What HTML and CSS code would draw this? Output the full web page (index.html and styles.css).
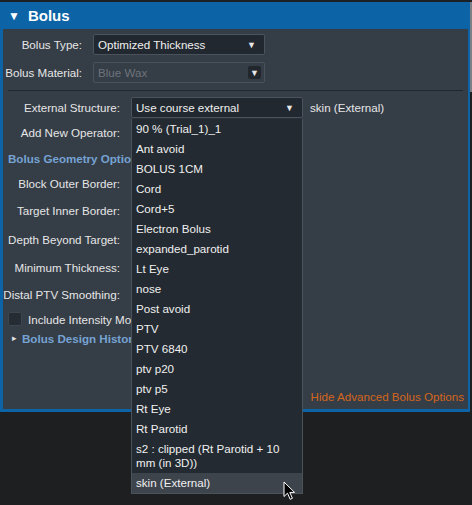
FILE: index.html
```html
<!DOCTYPE html>
<html>
<head>
<meta charset="utf-8">
<link rel="stylesheet" href="styles.css">
</head>
<body>
<div class="topstrip"></div>
<div class="panel">
  <div class="header"><span class="caret">▼</span>Bolus</div>
  <div class="content">
    <div class="row">
      <label class="lbl short">Bolus Type:</label>
      <div class="select"><span>Optimized Thickness</span><span class="arrow">▼</span></div>
    </div>
    <div class="row">
      <label class="lbl short">Bolus Material:</label>
      <div class="select disabled"><span>Blue Wax</span><span class="btn"><span class="arrow">▼</span></span></div>
    </div>
    <div class="sep"></div>
    <div class="row last">
      <label class="lbl">External Structure:</label>
      <div class="select"><span>Use course external</span><span class="arrow">▼</span></div>
      <span class="value">skin (External)</span>
    </div>
    <div class="frow h28"><label class="lbl">Add New Operator:</label></div>
    <div class="frow h24"><span class="section">Bolus Geometry Options</span></div>
    <div class="frow h26"><label class="lbl">Block Outer Border:</label></div>
    <div class="frow h28"><label class="lbl">Target Inner Border:</label></div>
    <div class="frow h30"><label class="lbl">Depth Beyond Target:</label></div>
    <div class="frow h26"><label class="lbl">Minimum Thickness:</label></div>
    <div class="frow h28"><label class="lbl">Distal PTV Smoothing:</label></div>
    <div class="frow h22 check"><span class="box"></span><span>Include Intensity Modulation</span></div>
    <div class="frow h16 hist"><span class="tri">▸</span><span class="section">Bolus Design History</span></div>
    <div class="footer"><span class="link">Hide Advanced Bolus Options</span></div>
  </div>
  <div class="scroll"></div>
</div>

<ul class="dropdown">
  <li>90 % (Trial_1)_1</li>
  <li>Ant avoid</li>
  <li>BOLUS 1CM</li>
  <li>Cord</li>
  <li>Cord+5</li>
  <li>Electron Bolus</li>
  <li>expanded_parotid</li>
  <li>Lt Eye</li>
  <li>nose</li>
  <li>Post avoid</li>
  <li>PTV</li>
  <li>PTV 6840</li>
  <li>ptv p20</li>
  <li>ptv p5</li>
  <li>Rt Eye</li>
  <li>Rt Parotid</li>
  <li>s2 : clipped (Rt Parotid + 10 mm (in 3D))</li>
  <li class="active">skin (External)</li>
</ul>

<svg class="cursor" width="14" height="20" viewBox="0 0 14 20">
  <path d="M1 1 L1 15.5 L4.5 12.2 L7.2 18.3 L9.4 17.3 L6.8 11.4 L11.6 11.4 Z" fill="#000" stroke="#fff" stroke-width="1"/>
</svg>
</body>
</html>
```

FILE: styles.css
```css
html, body {
  margin: 0;
  padding: 0;
}

body {
  background: #1e1f21;
  font-family: "Liberation Sans", Arial, sans-serif;
  font-size: 11.6px;
  color: #e6e6e6;
  width: 472px;
  height: 505px;
  overflow: hidden;
  position: relative;
}

.topstrip {
  height: 2px;
  background: #1c2127;
}

.panel {
  position: relative;
  width: 470px;
  box-sizing: border-box;
  border-left: 3px solid #0c63a5;
  border-right: 2px solid #0c63a5;
  border-bottom: 3px solid #0c63a5;
  background: #353d47;
}

.scroll {
  position: absolute;
  top: 0;
  right: -4px;
  width: 2px;
  height: 90px;
  background: #7c8188;
}

.header {
  height: 27px;
  margin-left: -3px;
  margin-right: -2px;
  padding-left: 8px;
  background: #0c63a5;
  color: #fff;
  font-weight: bold;
  font-size: 15px;
  display: flex;
  align-items: center;
}

.caret {
  font-size: 12px;
  margin-right: 8px;
}

.content {
  padding: 5px 0 0 0;
  height: 380px;
  box-sizing: border-box;
  display: flex;
  flex-direction: column;
}

.row {
  display: flex;
  align-items: center;
  margin-bottom: 7px;
  flex: none;
}

.row.last {
  margin-bottom: 0;
}

.lbl {
  width: 117px;
  text-align: right;
  flex: none;
  white-space: nowrap;
}

.lbl.short {
  width: 79px;
}

.row .lbl {
  margin-right: 11px;
}

.select {
  width: 172px;
  height: 21px;
  box-sizing: border-box;
  border: 1px solid #4a525c;
  border-radius: 2px;
  background: #22282f;
  display: flex;
  align-items: center;
  justify-content: space-between;
  padding: 0 8px 0 4px;
  color: #f0f0f0;
}

.arrow {
  font-size: 9px;
  color: #e8e8e8;
}

.select.disabled {
  background: #353d47;
  color: #6e747b;
  padding-right: 3px;
}

.btn {
  width: 13px;
  height: 13px;
  background: #22272d;
  border-radius: 2px;
  display: flex;
  align-items: center;
  justify-content: center;
}

.sep {
  height: 1px;
  flex: none;
  background: #22272d;
  margin: 0 5px 6px 5px;
}

.value {
  margin-left: 7px;
  color: #e6e6e6;
}

.frow {
  display: flex;
  align-items: center;
  flex: none;
}

.h16 { height: 16px; }
.h22 { height: 22px; }
.h24 { height: 24px; }
.h26 { height: 26px; }
.h28 { height: 28px; }
.h30 { height: 30px; }

.section {
  color: #76a3d3;
  font-weight: bold;
  white-space: nowrap;
}

.frow > .section {
  padding-left: 5px;
}

.check {
  padding-left: 5px;
  gap: 6px;
  white-space: nowrap;
}

.box {
  width: 12px;
  height: 12px;
  flex: none;
  background: #262c33;
  border: 1px solid #3e454d;
  border-radius: 2px;
}

.hist {
  padding-left: 9px;
}

.hist .tri {
  font-size: 9px;
  color: #e0e0e0;
  margin-right: 5px;
}

.hist .section {
  padding-left: 0;
}

.footer {
  margin-top: auto;
  display: flex;
  justify-content: flex-end;
  padding: 0 4px 6px 0;
}

.link {
  color: #d4661c;
}

.dropdown {
  position: absolute;
  left: 131px;
  top: 118px;
  width: 172px;
  box-sizing: border-box;
  margin: 0;
  padding: 0;
  list-style: none;
  background: #232a31;
  border: 1px solid #4a525c;
  border-top-color: #2b3138;
}

.dropdown li {
  padding: 3px 5px 3px 4px;
  line-height: 14px;
  color: #f0f0f0;
}

.dropdown li.active {
  background: #3e444c;
}

.cursor {
  position: absolute;
  left: 283px;
  top: 481px;
}
```
